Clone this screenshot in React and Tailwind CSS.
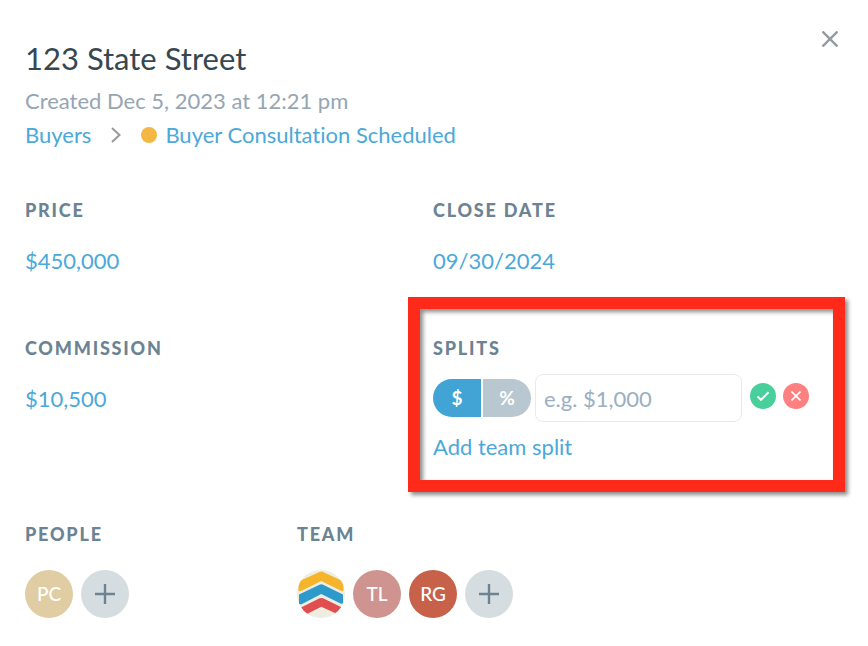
import { useState } from 'react'

const PEOPLE = [{ initials: 'PC', color: 'bg-[#e0cda3]' }]

const TEAM = [
  { initials: 'TL', color: 'bg-[#cf9490]' },
  { initials: 'RG', color: 'bg-[#c7614a]' },
]

function Label({ children }) {
  return <h2 className="text-[18px] leading-7 font-black tracking-widest uppercase text-[#6b8393]">{children}</h2>
}

function Field({ label, value }) {
  return (
    <section className="h-[138px]">
      <Label>{label}</Label>
      <button type="button" className="mt-5 block leading-[34px] text-[#4aa9da]">{value}</button>
    </section>
  )
}

function Avatar({ initials, color }) {
  return (
    <span className={`flex size-12 items-center justify-center rounded-full text-[19px] font-medium text-white ${color}`}>
      {initials}
    </span>
  )
}

function AddButton({ label }) {
  return (
    <button type="button" aria-label={label} className="flex size-12 items-center justify-center rounded-full bg-[#d6dde1]">
      <svg width="20" height="20" viewBox="0 0 20 20" fill="none" stroke="#6b8393" strokeWidth="2.4">
        <path d="M10 0v20M0 10h20" />
      </svg>
    </button>
  )
}

function TeamLogo() {
  return (
    <svg width="48" height="48" viewBox="0 0 48 48" role="img" aria-label="Team logo">
      <clipPath id="logo-clip">
        <circle cx="24" cy="24" r="24" />
      </clipPath>
      <g clipPath="url(#logo-clip)">
        <path fill="#edede2" d="M0 0h48v48H0z" />
        <path fill="#f6b42b" d="M1.500 11.500 22.500 2q1.800-.8 3.600 0L46.500 11.500V20q-.3 1.600-2 1L24.300 11 5 20.500q-3 1.200-3.500 0z" />
        <path fill="#2d9acb" d="M2 24.500 22.500 14.700q1.800-.8 3.600 0L46 24.500v8.500q-.8 1.300-2.500.5L24.300 24 5.500 33.700q-2.500 1-3.500 0z" />
        <path fill="#e04e50" d="M4 37.500 22.500 28.300q1.800-.8 3.600 0L45 37.500l-5 5.500q-1 .5-2 0L24.300 36.700 11 43.500q-1.500.6-3 0z" />
      </g>
    </svg>
  )
}

function SplitEditor() {
  const [unit, setUnit] = useState('$')
  const units = [
    { value: '$', shape: 'rounded-l-full' },
    { value: '%', shape: 'rounded-r-full' },
  ]

  return (
    <section className="relative">
      <Label>Splits</Label>
      <div className="mt-3 flex items-center">
        <div className="flex gap-0.5">
          {units.map(({ value, shape }) => (
            <button
              key={value}
              type="button"
              aria-pressed={unit === value}
              onClick={() => setUnit(value)}
              className={`h-[38px] w-12 text-[19px] font-bold text-white ${shape} ${
                unit === value ? 'bg-[#42a3d5]' : 'bg-[#b9c7d0]'
              }`}
            >
              {value}
            </button>
          ))}
        </div>
        <input
          type="text"
          aria-label="Split amount"
          placeholder="e.g. $1,000"
          className="ml-1 h-12 w-0 max-w-[207px] flex-1 rounded-lg border border-[#e8eaec] px-2 text-[#37474f] outline-none placeholder:text-[#9aafc0]"
        />
        <div className="ml-2 flex gap-[7px] pb-1">
          <button type="button" aria-label="Save split" className="flex size-[26px] items-center justify-center rounded-full bg-[#49cf9b]">
            <svg width="14" height="14" viewBox="0 0 14 14" fill="none" stroke="#fff" strokeWidth="2">
              <path d="m1.500 7.500 3.500 3.300 7.500-7.500" />
            </svg>
          </button>
          <button type="button" aria-label="Cancel split" className="flex size-[26px] items-center justify-center rounded-full bg-[#ff8080]">
            <svg width="10" height="10" viewBox="0 0 10 10" fill="none" stroke="#fff" strokeWidth="1.6">
              <path d="m.5.5 9 9M9.500.5l-9 9" />
            </svg>
          </button>
        </div>
      </div>
      <button type="button" className="mt-2 block leading-[34px] text-[#4aa9da]">Add team split</button>

      {/* Highlight frame */}
      <div className="pointer-events-none absolute -top-[37px] -right-1 -bottom-5 -left-[25px] border-12 border-[#ff2a1a] shadow-[3px_3px_4px_rgba(0,0,0,0.45)]">
        <div className="size-full shadow-[inset_3px_3px_4px_rgba(0,0,0,0.45)]" />
      </div>
    </section>
  )
}

export default function App() {
  return (
    <main className="relative bg-white pt-[38px] pr-[27px] pb-7 pl-[25px] font-['Lato',sans-serif] text-[22px] [font-variant-ligatures:none]">
      <button type="button" aria-label="Close" className="absolute top-[31px] right-[30px]">
        <svg width="16" height="16" viewBox="0 0 16 16" fill="none" stroke="#969b9f" strokeWidth="2.4">
          <path d="m.5.5 15 15M15.500.5l-15 15" />
        </svg>
      </button>

      <header>
        <h1 className="text-[31px] leading-10 text-[#37474f]">123 State Street</h1>
        <p className="mt-1.5 leading-[34px] text-[#95a5b3]">Created Dec 5, 2023 at 12:21 pm</p>
        <nav className="flex items-center leading-[34px] text-[#4aa9da]">
          <a href="#buyers">Buyers</a>
          <svg className="mx-5" width="10" height="16" viewBox="0 0 10 16" fill="none" stroke="#999" strokeWidth="2">
            <path d="m1 1 7.500 7L1 15" />
          </svg>
          <span className="mr-2 size-4 rounded-full bg-[#f3b844]" />
          <a href="#stage">Buyer Consultation Scheduled</a>
        </nav>
      </header>

      <div className="mt-11 grid grid-cols-2">
        <Field label="Price" value="$450,000" />
        <Field label="Close date" value="09/30/2024" />
        <Field label="Commission" value="$10,500" />
        <SplitEditor />
      </div>

      <div className="mt-12 grid grid-cols-3">
        <section>
          <Label>People</Label>
          <div className="mt-[22px] flex gap-2">
            {PEOPLE.map((p) => <Avatar key={p.initials} {...p} />)}
            <AddButton label="Add person" />
          </div>
        </section>
        <section>
          <Label>Team</Label>
          <div className="mt-[22px] flex gap-2">
            <TeamLogo />
            {TEAM.map((p) => <Avatar key={p.initials} {...p} />)}
            <AddButton label="Add team member" />
          </div>
        </section>
      </div>
    </main>
  )
}
